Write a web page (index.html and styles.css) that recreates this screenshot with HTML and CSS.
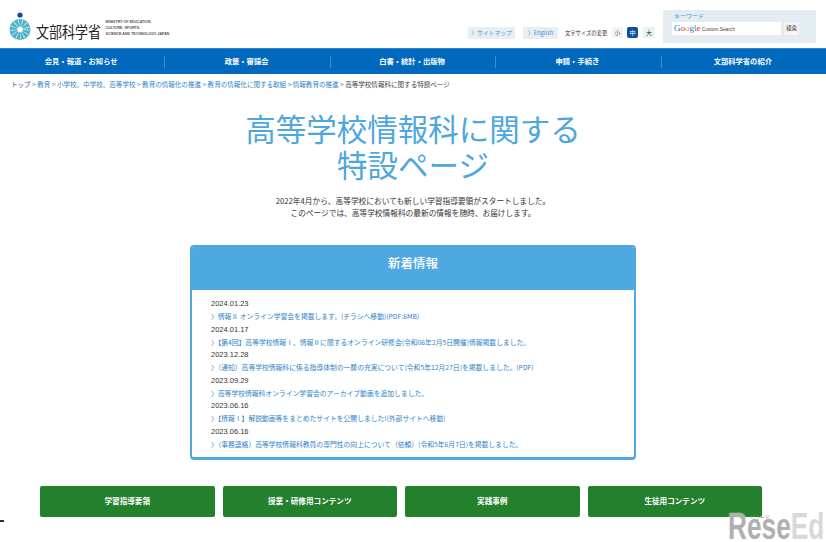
FILE: index.html
```html
<!DOCTYPE html>
<html lang="ja">

<head>
	<meta charset="UTF-8">
	<title>高等学校情報科に関する特設ページ</title>
	<link rel="stylesheet" href="styles.css">
</head>

<body>
	<header class="siteHeader">
		<div class="logo">
			<svg class="logoMark" width="22" height="36" viewBox="0 0 22 36">
				<circle cx="11" cy="6" r="2.600" fill="#0f4c97"/>
				<circle cx="11" cy="20.500" r="10.500" fill="#4fb3c8"/>
				<circle cx="11" cy="20.500" r="6" fill="none" stroke="#dff2f6" stroke-width="7" stroke-dasharray="0.600 2.300"/>
				<circle cx="11" cy="20.500" r="2.800" fill="#fff"/>
			</svg>
			<span class="logoName">文部科学省</span>
			<span class="logoEn">MINISTRY OF EDUCATION,<br>CULTURE, SPORTS,<br>SCIENCE AND TECHNOLOGY-JAPAN</span>
		</div>
		<div class="headerTools">
			<a class="toolLink">〉サイトマップ</a>
			<a class="toolLink toolEnglish">〉English</a>
			<span class="sizeLabel">文字サイズの変更</span>
			<span class="sizeBtn small">小</span>
			<span class="sizeBtn current">中</span>
			<span class="sizeBtn large">大</span>
		</div>
		<div class="searchPanel">
			<div class="searchLabel">キーワード</div>
			<div class="searchRow">
				<div class="searchInput"><span class="google"><i class="gb">G</i><i class="gr">o</i><i class="gy">o</i><i class="gb">g</i><i class="gg">l</i><i class="gr">e</i></span> Custom Search</div>
				<div class="searchBtn">検索</div>
			</div>
		</div>
	</header>

	<nav class="mainNav">
		<a>会見・報道・お知らせ</a>
		<a>政策・審議会</a>
		<a>白書・統計・出版物</a>
		<a>申請・手続き</a>
		<a>文部科学省の紹介</a>
	</nav>

	<div class="breadcrumb">
		<a class="visited">トップ</a> &gt; <a>教育</a> &gt; <a>小学校、中学校、高等学校</a> &gt; <a>教育の情報化の推進</a> &gt; <a>教育の情報化に関する取組</a> &gt; <a>情報教育の推進</a> &gt; <span>高等学校情報科に関する特設ページ</span>
	</div>

	<main>
		<h1 class="pageTitle">高等学校情報科に関する<br>特設ページ</h1>
		<p class="intro">2022年4月から、高等学校においても新しい学習指導要領がスタートしました。<br>このページでは、高等学校情報科の最新の情報を随時、お届けします。</p>

		<section class="newsCard">
			<h2 class="newsHead">新着情報</h2>
			<dl class="newsList">
				<dt>2024.01.23</dt>
				<dd>〉情報Ⅱ オンライン学習会を掲載します。(チラシへ移動)(PDF:6MB)</dd>
				<dt>2024.01.17</dt>
				<dd>〉【第4回】高等学校情報Ⅰ、情報Ⅱに関するオンライン研修会(令和06年2月5日開催)情報掲載しました。</dd>
				<dt>2023.12.28</dt>
				<dd>〉（通知）高等学校情報科に係る指導体制の一層の充実について(令和5年12月27日)を掲載しました。(PDF)</dd>
				<dt>2023.09.29</dt>
				<dd>〉高等学校情報科オンライン学習会のアーカイブ動画を追加しました。</dd>
				<dt>2023.06.16</dt>
				<dd>〉【情報Ⅰ】解説動画等をまとめたサイトを公開しました!(外部サイトへ移動)</dd>
				<dt>2023.06.16</dt>
				<dd>〉（事務連絡）高等学校情報科教員の専門性の向上について（依頼）(令和5年6月7日)を掲載しました。</dd>
			</dl>
		</section>

		<div class="greenBtns">
			<a>学習指導要領</a>
			<a>授業・研修用コンテンツ</a>
			<a>実践事例</a>
			<a>生徒用コンテンツ</a>
		</div>
	</main>

	<div class="edgeMark"></div>
	<div class="watermark"><span class="wmKana">リシード</span>Rese<span class="wmLight">Ed</span></div>
</body>

</html>
```

FILE: styles.css
```css
body {
    font-family: "Noto Sans CJK JP", "Liberation Sans", sans-serif;
    background-color: #fff;
    color: #333;
    margin: 0;
    height: 542px;
    overflow: hidden;
    position: relative;
}
.siteHeader {
    height: 48px;
    display: flex;
    align-items: flex-start;
    padding-left: 9px;
}
.logo {
    width: 459px;
    display: flex;
    align-items: center;
    margin-top: 9px;
    height: 36px;
}
.logoName {
    display: inline-block;
    font-size: 15.500px;
    color: #222;
    margin-left: 5px;
    margin-right: -12px;
    margin-top: 8px;
    transform: scaleX(0.84);
    transform-origin: left;
}
.logoEn {
    font-family: "Liberation Sans", sans-serif;
    font-size: 3.600px;
    line-height: 5.800px;
    margin-left: 4px;
    margin-top: 4px;
    font-weight: bold;
    color: #555;
    white-space: nowrap;
}
.headerTools {
    display: flex;
    align-items: center;
    width: 195px;
    margin-top: 26px;
    height: 13px;
    font-size: 5.800px;
}
.toolLink {
    background-color: #e9eef3;
    color: #4b95cf;
    height: 12px;
    line-height: 12px;
    width: 47px;
    margin-right: 8px;
    text-align: center;
    white-space: nowrap;
}
.toolEnglish {
    width: 35px;
    margin-right: 7px;
}
.sizeLabel {
    color: #333;
    width: 47px;
    font-size: 5.300px;
    white-space: nowrap;
}
.sizeBtn {
    width: 11px;
    height: 11px;
    line-height: 11px;
    text-align: center;
    border-radius: 2px;
    margin-right: 5px;
    font-size: 6px;
}
.sizeBtn.small {
    background-color: #eef3f3;
    color: #555;
    margin-right: 4px;
}
.sizeBtn.current {
    background-color: #0f4f9c;
    color: #fff;
}
.sizeBtn.large {
    background-color: #e8f1f3;
    color: #222;
    width: 12px;
    margin: 0;
}
.searchPanel {
    margin-top: 10px;
    width: 153px;
    height: 33px;
    background-color: #e3ecf1;
    padding-left: 9px;
    box-sizing: border-box;
}
.searchLabel {
    font-size: 6px;
    color: #4b95cf;
    line-height: 12px;
    padding-left: 2px;
}
.searchRow {
    display: flex;
    align-items: center;
    gap: 3px;
}
.searchInput {
    width: 109px;
    height: 13px;
    line-height: 13px;
    background-color: #fff;
    font-family: "Liberation Sans", sans-serif;
    font-size: 4.800px;
    color: #444;
    padding-left: 2px;
    box-sizing: border-box;
    white-space: nowrap;
}
.google {
    font-family: "Liberation Serif", serif;
    font-size: 9px;
}
.google i {
    font-style: normal;
}
.gb { color: #3a6fd0; }
.gr { color: #d2402f; }
.gy { color: #d9a520; }
.gg { color: #3f9a4a; }
.searchBtn {
    width: 15px;
    height: 13px;
    line-height: 13px;
    text-align: center;
    background-color: #f4f4f4;
    font-size: 5.500px;
    color: #333;
}
.mainNav {
    height: 26px;
    background-color: #0068bd;
    border-top: 1px solid #2f86cc;
    box-sizing: border-box;
    display: flex;
    align-items: center;
}
.mainNav a {
    flex: 1;
    height: 12px;
    line-height: 11px;
    color: #fff;
    font-size: 7.300px;
    font-weight: bold;
    text-align: center;
    border-left: 1px solid #3f8fd0;
    padding-right: 2px;
}
.mainNav a:first-child {
    border-left: none;
}
.breadcrumb {
    font-size: 6.550px;
    line-height: 10px;
    margin-top: 5px;
    padding-left: 11px;
    color: #2f7fc4;
    white-space: nowrap;
}
.breadcrumb .visited {
    color: #5b3f8f;
}
.breadcrumb span {
    color: #444;
}
main {
    display: flex;
    flex-direction: column;
    align-items: center;
}
.pageTitle {
    font-size: 30.500px;
    line-height: 36px;
    font-weight: 400;
    color: #4ea7dd;
    text-align: center;
    margin: 21px 0 0 0;
}
.intro {
    font-size: 7.700px;
    line-height: 12px;
    text-align: center;
    color: #333;
    margin: 13px 0 0 0;
}
.newsCard {
    width: 446px;
    height: 215px;
    box-sizing: border-box;
    margin-top: 26px;
    border: 2px solid #4ea9e0;
    border-bottom-width: 3px;
    border-radius: 4px;
    overflow: hidden;
}
.newsHead {
    background-color: #4ea9e0;
    color: #fff;
    height: 43px;
    line-height: 31px;
    font-size: 12.500px;
    font-weight: 500;
    text-align: center;
    margin: 0;
}
.newsList {
    margin: 8px 0 0 19px;
}
.newsList dt {
    font-family: "Liberation Sans", sans-serif;
    font-size: 7.500px;
    line-height: 12px;
    color: #333;
}
.newsList dd {
    margin: 0 0 1.500px 0;
    font-size: 6.800px;
    line-height: 12px;
    color: #2f83c6;
    white-space: nowrap;
}
.greenBtns {
    display: flex;
    gap: 8px;
    margin-top: 26px;
    margin-left: 40px;
    align-self: flex-start;
}
.greenBtns a {
    width: 174.500px;
    height: 31px;
    line-height: 30px;
    background-color: #23802d;
    border-radius: 2px;
    color: #fff;
    font-size: 7.600px;
    font-weight: bold;
    text-align: center;
}
.edgeMark {
    position: absolute;
    left: 0;
    top: 520px;
    width: 4px;
    height: 2px;
    background-color: #333;
}
.watermark {
    position: absolute;
    left: 728px;
    top: 511.500px;
    font-family: "Liberation Sans", sans-serif;
    font-size: 37px;
    font-weight: bold;
    line-height: 30px;
    color: #b0b0b0;
    text-shadow: 0 0 2px rgba(255,255,255,0.8);
    transform: scaleX(0.71);
    transform-origin: left;
    white-space: nowrap;
}
.wmLight {
    color: #d8d8d8;
}
.wmKana {
    position: absolute;
    left: 31px;
    top: 2px;
    font-family: "Noto Sans CJK JP", sans-serif;
    font-size: 7px;
    line-height: 6px;
    font-weight: normal;
    color: #999;
    text-shadow: none;
}
```
